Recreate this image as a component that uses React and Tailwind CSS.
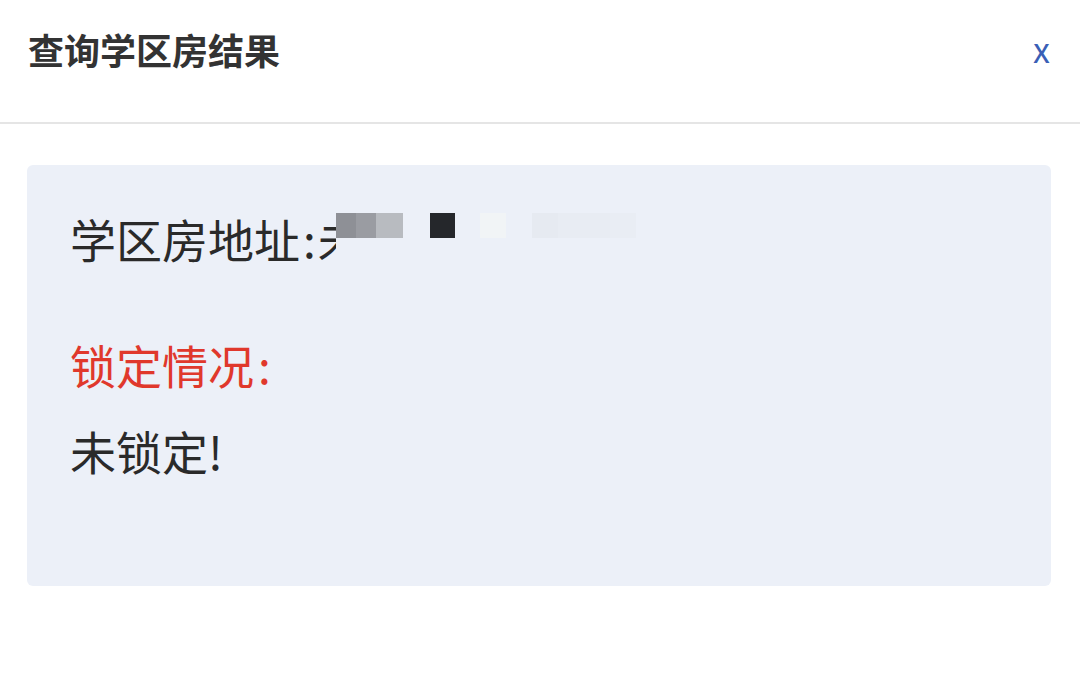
export default function App() {
  return (
    <div
      className="w-[1080px] h-[685px] bg-white overflow-hidden"
      style={{ fontFamily: '"Noto Sans CJK SC", "Noto Sans", sans-serif' }}
    >
      {/* Header */}
      <div className="h-[124px] flex items-start justify-between pt-[22px] pl-[28px] pr-[30px] border-b-2 border-[#e5e5e5]">
        <h2 className="text-[36px] leading-[54px] font-bold text-[#333333]">查询学区房结果</h2>
        <span className="text-[34px] leading-[54px] text-[#3a5fb6]">x</span>
      </div>

      {/* Result card */}
      <div className="pl-[27px] pr-[29px] pt-[41px]">
        <div className="h-[421px] rounded-[6px] bg-[#ecf0f8] px-[43px] pt-[40px] text-[46px] leading-[66px] text-[#2a2a2a]">
          <div className="flex items-center">
            <span>学区房地址<span className="ml-[3px]">:</span></span>
            <span className="inline-block w-[18px] ml-[2px] overflow-hidden whitespace-nowrap">未</span>
            <Blur />
          </div>
          <div className="mt-[60px] text-[#e0382c]">
            锁定情况<span className="ml-[4px]">:</span>
          </div>
          <div className="mt-[20px]">未锁定!</div>
        </div>
      </div>
    </div>
  )
}

/**
 * Mosaic over the address
 */
function Blur() {
  return (
    <div className="flex items-start -mt-[26px]">
      <div className="w-[20px] h-[25px] bg-[#8e9096]" />
      <div className="w-[20px] h-[25px] bg-[#9a9ca2]" />
      <div className="w-[27px] h-[25px] bg-[#b8bbc0]" />
      <div className="w-[27px] h-[25px]" />
      <div className="w-[25px] h-[25px] bg-[#25272b]" />
      <div className="w-[25px] h-[25px]" />
      <div className="w-[26px] h-[25px] bg-[#f1f4f6]" />
      <div className="w-[26px] h-[25px]" />
      <div className="w-[26px] h-[25px] bg-[#e6eaf1]" />
      <div className="w-[52px] h-[25px] bg-[#e8ecf3]" />
      <div className="w-[26px] h-[25px] bg-[#e9edf4]" />
    </div>
  )
}
